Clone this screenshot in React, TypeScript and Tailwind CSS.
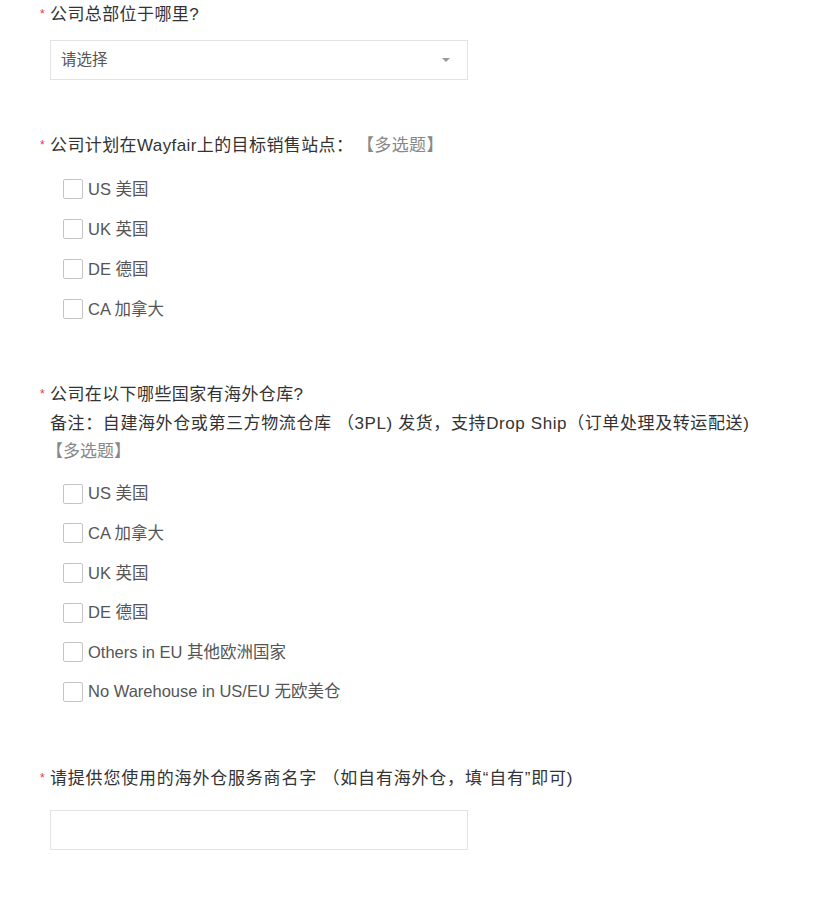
import { ReactNode } from "react"

const font = { fontFamily: '"Liberation Sans", "Noto Sans CJK SC", sans-serif' }

function Title({ children, className = "" }: { children: ReactNode; className?: string }) {
  return (
    <div className={`flex items-center h-[30px] ${className}`}>
      <span className="w-[10px] text-[12px] leading-none text-[#e4393c] -mt-[2px]">*</span>
      <span className="text-[17px] tracking-[0.4px] text-[#333]">{children}</span>
    </div>
  )
}

function Checkbox({ label }: { label: string }) {
  return (
    <label className="flex items-center h-[40px] pl-[23px] cursor-pointer">
      <span className="w-[20px] h-[20px] border border-[#c4c4c4] rounded-[2px] bg-white shrink-0" />
      <span className="ml-[5px] text-[16.5px] text-[#555]">{label}</span>
    </label>
  )
}

export default function App() {
  const sites = ["US 美国", "UK 英国", "DE 德国", "CA 加拿大"]
  const warehouses = [
    "US 美国",
    "CA 加拿大",
    "UK 英国",
    "DE 德国",
    "Others in EU 其他欧洲国家",
    "No Warehouse in US/EU 无欧美仓",
  ]

  return (
    <div className="min-h-screen bg-white pl-[40px]" style={font}>
      {/* Headquarters */}
      <section>
        <Title>公司总部位于哪里?</Title>
        <div className="ml-[10px] mt-[10px] w-[418px] h-[40px] border border-[#e3e3e3] flex items-center justify-between px-[10px]">
          <span className="text-[15.5px] text-[#555]">请选择</span>
          <svg width="10" height="6" viewBox="0 0 10 6" className="mr-[6px]">
            <path d="M1 1h8L5 5z" fill="#999" />
          </svg>
        </div>
      </section>

      {/* Target sites */}
      <section className="mt-[51px]">
        <Title>
          公司计划在Wayfair上的目标销售站点：<span className="ml-[12px] text-[#888]">【多选题】</span>
        </Title>
        <div className="mt-[8px]">
          {sites.map((s) => (
            <Checkbox key={s} label={s} />
          ))}
        </div>
      </section>

      {/* Overseas warehouses */}
      <section className="mt-[51px]">
        <Title className="h-[28px]">公司在以下哪些国家有海外仓库?</Title>
        <div className="pl-[10px] text-[17px] tracking-[0.6px] text-[#333] leading-[28px]">
          备注：自建海外仓或第三方物流仓库 （3PL) 发货，支持Drop Ship（订单处理及转运配送)
        </div>
        <div className="pl-[6px] text-[17px] text-[#888] leading-[28px]">【多选题】</div>
        <div className="mt-[8px]">
          {warehouses.map((s) => (
            <div key={s} className="h-[39.6px] flex items-center">
              <Checkbox label={s} />
            </div>
          ))}
        </div>
      </section>

      {/* Service provider */}
      <section className="mt-[52px]">
        <Title className="[&>span:last-child]:tracking-[0.8px]">
          请提供您使用的海外仓服务商名字 （如自有海外仓，填“自有”即可)
        </Title>
        <input
          type="text"
          className="block ml-[10px] mt-[16px] w-[418px] h-[40px] border border-[#e3e3e3] outline-none px-[10px]"
        />
      </section>
    </div>
  )
}
